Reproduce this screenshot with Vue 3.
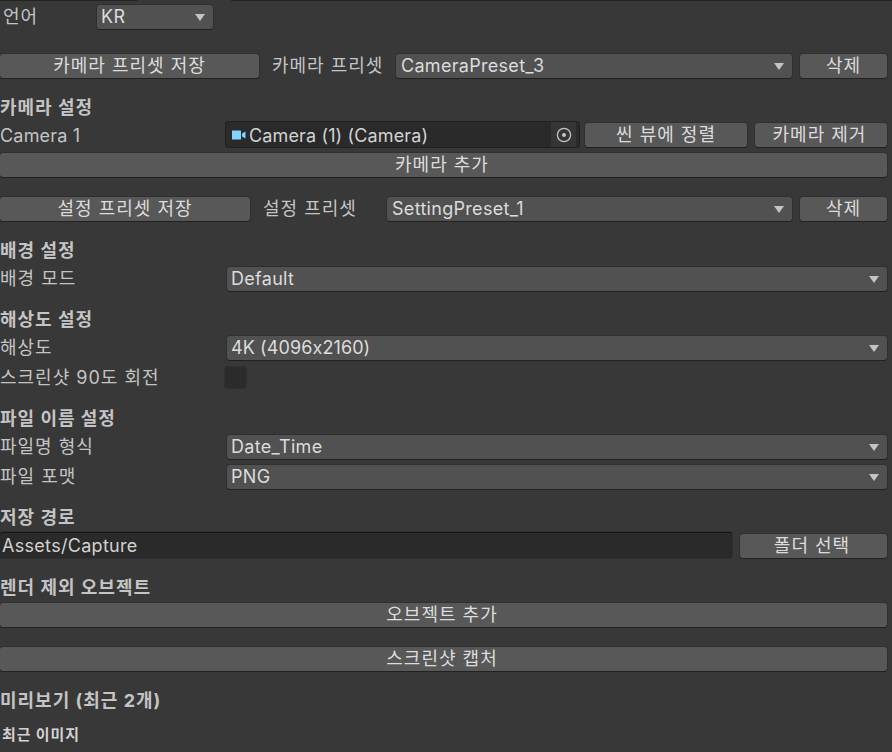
<script setup>
</script>

<template>
  <div class="panel">
    <div class="topline"><span class="tab"></span></div>
    <div class="row lang">
      <span class="label lang-label">언어</span>
      <div class="drop lang-drop"><span>KR</span><i class="arrow"></i></div>
    </div>

    <div class="row preset">
      <button class="btn save-cam">카메라 프리셋 저장</button>
      <span class="label preset-label">카메라 프리셋</span>
      <div class="drop grow inset"><span>CameraPreset_3</span><i class="arrow"></i></div>
      <button class="btn del">삭제</button>
    </div>

    <div class="head h-cam">카메라 설정</div>
    <div class="row cam">
      <span class="label col-label-cam">Camera 1</span>
      <div class="field objfield">
        <svg class="camicon" width="14" height="10" viewBox="0 0 14 10">
          <rect x="0" y="0.5" width="9" height="9" rx="0.5" fill="#80d4ff" />
          <path d="M10 3.5 L13.5 1.5 V8.5 L10 6.5 Z" fill="#80d4ff" />
        </svg>
        <span class="objtext">Camera (1) (Camera)</span>
        <span class="picker">
          <svg width="16" height="16" viewBox="0 0 16 16">
            <circle cx="8" cy="8" r="6.6" fill="none" stroke="#c4c4c4" stroke-width="1.3" />
            <circle cx="8" cy="8" r="2" fill="#c4c4c4" />
          </svg>
        </span>
      </div>
      <button class="btn align">씬 뷰에 정렬</button>
      <button class="btn remove">카메라 제거</button>
    </div>
    <div class="row add-cam"><button class="btn wide">카메라 추가</button></div>

    <div class="row setting">
      <button class="btn save-set">설정 프리셋 저장</button>
      <span class="label preset-label">설정 프리셋</span>
      <div class="drop grow inset"><span>SettingPreset_1</span><i class="arrow"></i></div>
      <button class="btn del">삭제</button>
    </div>

    <div class="head h-bg">배경 설정</div>
    <div class="row prop">
      <span class="label prop-label">배경 모드</span>
      <div class="drop grow"><span>Default</span><i class="arrow"></i></div>
    </div>

    <div class="head h-res">해상도 설정</div>
    <div class="row prop">
      <span class="label prop-label">해상도</span>
      <div class="drop grow"><span class="tight">4K (4096x2160)</span><i class="arrow"></i></div>
    </div>
    <div class="row check-row">
      <span class="label prop-label">스크린샷 90도 회전</span>
      <span class="check"></span>
    </div>

    <div class="head h-file">파일 이름 설정</div>
    <div class="row prop">
      <span class="label prop-label">파일명 형식</span>
      <div class="drop grow"><span>Date_Time</span><i class="arrow"></i></div>
    </div>
    <div class="row second">
      <span class="label prop-label">파일 포맷</span>
      <div class="drop grow"><span>PNG</span><i class="arrow"></i></div>
    </div>

    <div class="head h-path">저장 경로</div>
    <div class="row path">
      <div class="field pathfield">Assets/Capture</div>
      <button class="btn folder">폴더 선택</button>
    </div>

    <div class="head h-excl">렌더 제외 오브젝트</div>
    <div class="row add-obj"><button class="btn wide">오브젝트 추가</button></div>
    <div class="row shot"><button class="btn wide">스크린샷 캡처</button></div>

    <div class="head h-prev">미리보기 (최근 2개)</div>
    <div class="small">최근 이미지</div>
  </div>
</template>

<style>
html, body { margin: 0; background: #383838; }
</style>

<style scoped>
.panel {
  width: 892px;
  height: 752px;
  overflow: hidden;
  background: #383838;
  color: #c4c4c4;
  font-family: Inter, "Noto Sans CJK KR", sans-serif;
  font-size: 18px;
  letter-spacing: 0.3px;
  font-feature-settings: "calt" 0;
  display: flex;
  flex-direction: column;
  box-sizing: border-box;
}
.topline { height: 1px; background: #232323; flex: none; position: relative; }
.tab { position: absolute; left: 138px; top: 0; width: 93px; height: 1px; background: #383838; }
.row { display: flex; align-items: center; flex: none; height: 24px; padding-right: 5px; }
.lang { margin-top: 4px; }
.preset { margin-top: 25px; }
.setting { margin-top: 20px; }
.label { white-space: nowrap; line-height: 24px; height: 24px; letter-spacing: 1px; }
.lang-label { width: 97px; padding-left: 3px; box-sizing: border-box; flex: none; }
.drop, .btn {
  height: 24px;
  box-sizing: border-box;
  background: #585858;
  border: 0;
  border-radius: 3px;
  box-shadow: 0 1px 0 #212121, 0 0 0 1px #303030;
  color: #dcdcdc;
  font: inherit;
  letter-spacing: inherit;
  white-space: nowrap;
  padding: 0;
  flex: none;
}
.drop { display: flex; align-items: center; justify-content: space-between; padding: 0 8px 0 4px; background: #515151; line-height: 22px; }
.drop.grow { flex: 1; min-width: 0; }
.drop.inset { padding-left: 5px; }
.tight { letter-spacing: 0.1px; }
.lang-drop { width: 116px; }
.arrow {
  width: 0; height: 0;
  border-left: 5.5px solid transparent;
  border-right: 5.5px solid transparent;
  border-top: 7px solid #c4c4c4;
  margin-top: 1px;
}
.btn { text-align: center; letter-spacing: 1px; line-height: 24px; }
.save-cam { width: 259px; }
.save-set { width: 250px; }
.preset-label { width: 124px; margin-left: 13px; flex: none; }
.del { width: 87px; margin-left: 8px; }
.head { font-weight: 700; flex: none; height: 24px; line-height: 25px; color: #c4c4c4; letter-spacing: 1px; }
.h-cam { margin-top: 17px; }
.h-bg { margin-top: 17px; }
.h-res { margin-top: 16px; }
.h-file { margin-top: 18px; }
.h-path { margin-top: 16px; }
.h-excl { margin-top: 17px; }
.h-prev { margin-top: 17px; }
.cam { margin-top: 3px; height: 25px; }
.col-label-cam { width: 226px; letter-spacing: 0.2px; line-height: 27px; height: 25px; flex: none; }
.field { background: #2a2a2a; border-radius: 3px; box-shadow: 0 0 0 1px #212121; box-sizing: border-box; }
.objfield {
  width: 353px; height: 25px; display: flex; align-items: center; padding-left: 6px; padding-right: 3px; overflow: hidden; flex: none;
}
.camicon { flex: none; margin-right: 3px; }
.objtext { flex: 1; white-space: nowrap; color: #d2d2d2; letter-spacing: 0.14px; line-height: 27px; height: 25px; }
.picker { width: 25px; height: 25px; background: #353535; display: flex; align-items: center; justify-content: center; flex: none; }
.align { width: 162px; margin-left: 6px; }
.remove { width: 132px; margin-left: 8px; padding-right: 3px; }
.add-cam { margin-top: 6px; }
.wide { width: 100%; padding-right: 3px; }
.prop { margin-top: 5px; }
.prop-label { width: 227px; flex: none; }
.second { margin-top: 6px; }
.check-row { margin-top: 7px; height: 21px; }
.check-row .label { line-height: 21px; height: 21px; }
.check { width: 21px; height: 21px; background: #2b2b2b; border-radius: 3px; box-shadow: 0 0 0 1px #303030; margin-left: -2px; }
.path { margin-top: 3px; height: 26px; align-items: flex-end; }
.pathfield { flex: 1; height: 26px; line-height: 28px; padding-left: 2px; box-shadow: inset 0 1px 0 #141414, 0 0 0 1px #303030; color: #d2d2d2; }
.folder { width: 147px; margin-left: 8px; padding-right: 3px; }
.add-obj { margin-top: 4px; }
.shot { margin-top: 20px; }
.small { font-size: 15px; font-weight: 700; margin-top: 13px; padding-left: 2px; line-height: 20px; color: #d2d2d2; letter-spacing: 0.9px; }
</style>
